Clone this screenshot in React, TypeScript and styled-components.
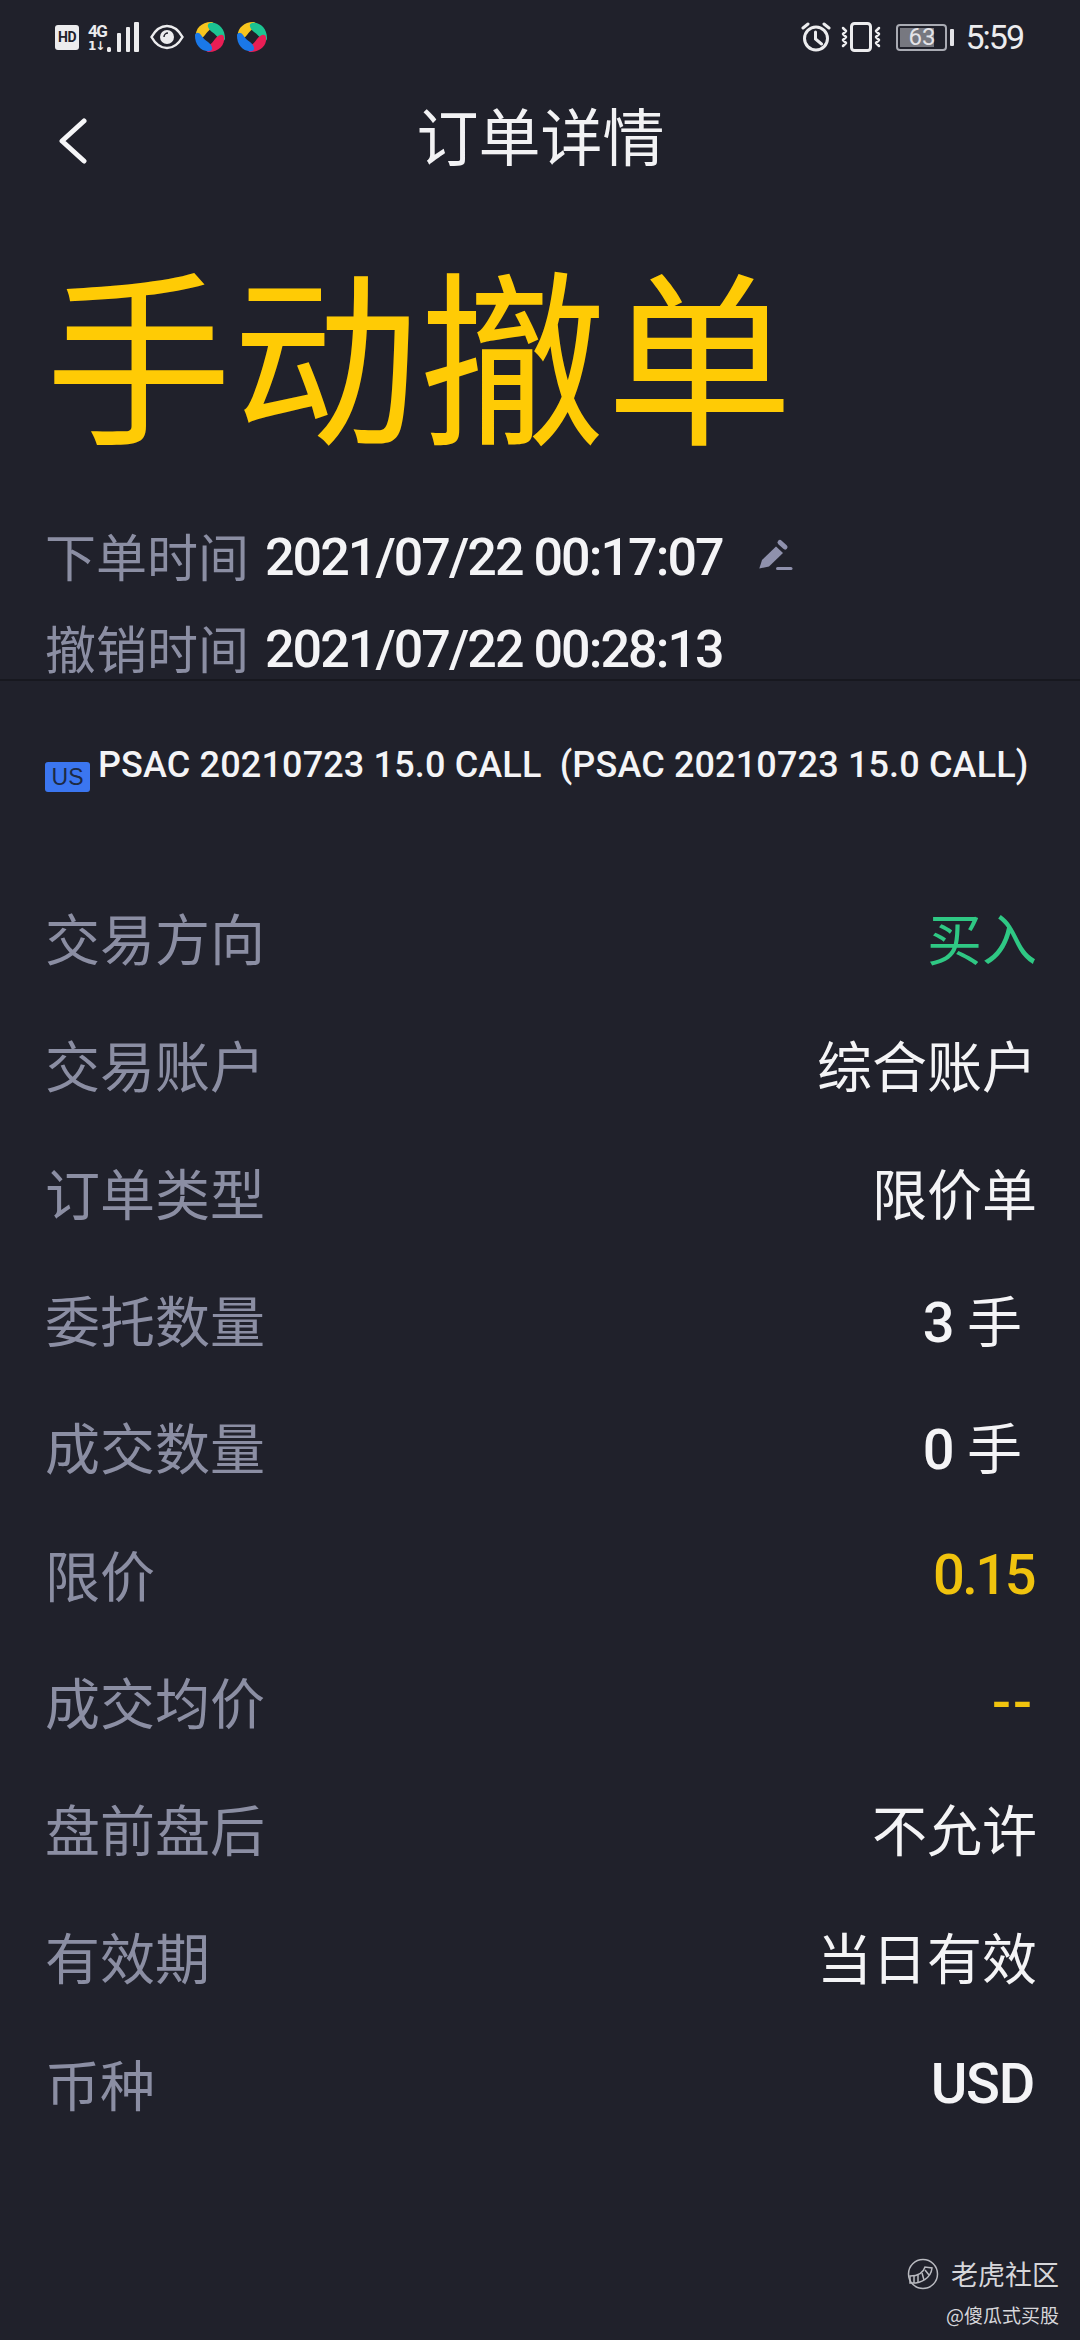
import React from 'react'
import styled, { createGlobalStyle } from 'styled-components'

const CJK = `"Noto Sans CJK SC", sans-serif`
const NUM = `Roboto, "Noto Sans CJK SC", sans-serif`

const GlobalStyle = createGlobalStyle`
	html, body {
		margin: 0;
		padding: 0;
		background: #20212b;
	}
	body {
		font-family: ${CJK};
	}
`

const Page = styled('div')`
	position: relative;
	width: 1080px;
	height: 2340px;
	overflow: hidden;
	background: #20212b;
	color: #f2f2f4;
`

const StatusBar = styled('div')`
	height: 74px;
	display: flex;
	align-items: center;
	justify-content: space-between;
	padding: 0 57px 0 55px;
`

const StatusGroup = styled('div')`
	display: flex;
	align-items: center;
`

const HdBadge = styled('span')`
	width: 24px;
	height: 25px;
	margin-right: 9px;
	border-radius: 3px;
	background: #ececee;
	color: #20212b;
	font: 700 14px/25px Roboto, sans-serif;
	letter-spacing: -0.5px;
	text-align: center;
`

const NetLabels = styled('span')`
	display: flex;
	flex-direction: column;
	width: 18px;
	color: #ececee;
`

const NetType = styled('span')`
	font: 700 17px/18px Roboto, sans-serif;
	letter-spacing: -1.5px;
`

const NetArrows = styled('span')`
	font: 700 12px/12px "DejaVu Sans", sans-serif;
	letter-spacing: -1px;
`

const ClockText = styled('span')`
	font: 400 34px/40px Roboto, sans-serif;
	color: #ececee;
	letter-spacing: -2px;
`

const BatteryBox = styled('div')`
	position: relative;
	width: 51px;
	height: 27px;
	box-sizing: border-box;
	border: 2px solid #a9abb3;
	border-radius: 4px;
	display: flex;
	align-items: center;
	justify-content: center;
	font: 400 24px/24px Roboto, sans-serif;
	color: #e4e4e8;
`

const BatteryFill = styled('i')`
	position: absolute;
	left: 2px;
	top: 2px;
	bottom: 2px;
	background: #777880;
`

const BatteryValue = styled('span')`
	position: relative;
`

const BatteryNub = styled('span')`
	width: 4px;
	height: 17px;
	margin: 0 11px 0 3px;
	border-radius: 1px;
	background: #e4e4e8;
`

const NavBar = styled('header')`
	height: 126px;
	display: flex;
	align-items: center;
	position: relative;
	padding-left: 58px;
`

const BackIcon = styled('svg')`
	margin-top: 7px;
`

const NavTitle = styled('h1')`
	position: absolute;
	left: 0;
	right: 0;
	margin: 0;
	padding: 0 0 6px 1px;
	text-align: center;
	font-size: 62px;
	font-weight: 400;
	line-height: 80px;
	color: #f2f2f4;
`

const Status = styled('div')`
	margin: 25px 0 0 45px;
	height: 250px;
	font-size: 187px;
	line-height: 250px;
	font-weight: 400;
	color: #ffcb05;
`

const MetaBlock = styled('section')`
	height: 206px;
	padding: 34px 0 0 45px;
	box-sizing: border-box;
	border-bottom: 2px solid #17181f;
`

const MetaRow = styled('div')`
	display: flex;
	align-items: center;
	height: 92px;
`

const MetaLabel = styled('span')`
	width: 220px;
	font-size: 51px;
	line-height: 60px;
	color: #8b8ea3;
`

const MetaValue = styled('span')`
	margin-top: 5px;
	font-family: ${NUM};
	font-size: 52px;
	line-height: 60px;
	font-weight: 500;
	letter-spacing: -1.95px;
	color: #f4f4f6;
`

const EditIcon = styled('svg')`
	margin-left: 34px;
	width: 36px;
	height: 36px;
`

const SymbolRow = styled('div')`
	display: flex;
	align-items: flex-start;
	margin-top: 60px;
	padding-left: 45px;
	height: 60px;
`

const MarketTag = styled('span')`
	width: 45px;
	height: 30px;
	margin-top: 21px;
	margin-right: 8px;
	border-radius: 3px;
	background: #3b76f0;
	color: #1d2a44;
	font: 400 23px/30px "Liberation Sans", sans-serif;
	text-align: center;
`

const SymbolName = styled('span')`
	margin-top: 1px;
	font-family: ${NUM};
	font-size: 36px;
	line-height: 46px;
	font-weight: 500;
	letter-spacing: 0.15px;
	white-space: pre;
	color: #f4f4f6;
`

const DetailList = styled('dl')`
	margin: 74px 0 0;
	padding: 0 46px 0 45px;
`

const DetailRow = styled('div')`
	display: flex;
	align-items: center;
	justify-content: space-between;
	height: 127.300px;
`

const DetailLabel = styled('dt')`
	padding-bottom: 5px;
	font-size: 55px;
	line-height: 70px;
	color: #8b8ea3;
`

const DetailValue = styled('dd')<{ $tone?: 'green' | 'yellow'; $tracking?: number; $inset?: boolean }>`
	margin: 0 ${(p) => (p.$inset ? '15px' : '0')} 0 0;
	font-family: ${NUM};
	font-size: 56px;
	line-height: 70px;
	font-weight: 500;
	letter-spacing: ${(p) => p.$tracking ?? 0}px;
	color: ${(p) =>
		p.$tone === 'green' ? '#2fc884' : p.$tone === 'yellow' ? '#f0c30e' : '#f4f4f6'};
`

const DetailText = styled('span')`
	margin-right: -3px;
	font-family: ${CJK};
	font-size: 55px;
	font-weight: 400;
	white-space: pre;
`

const Watermark = styled('div')`
	position: absolute;
	right: 21px;
	bottom: 10px;
	display: flex;
	flex-direction: column;
	align-items: flex-end;
	color: #d6d6da;
`

const WatermarkTop = styled('div')`
	display: flex;
	align-items: center;
	gap: 12px;
	font-size: 27px;
	line-height: 40px;
`

const WatermarkSub = styled('div')`
	font-size: 19px;
	line-height: 30px;
	margin-top: 6px;
`

const swirlPetals = [
	{ color: '#f7c51e', angle: 0 },
	{ color: '#1cc492', angle: 90 },
	{ color: '#e91e55', angle: 180 },
	{ color: '#1a78e8', angle: 270 },
]

const Swirl: React.FC<{ last?: boolean }> = ({ last }) => (
	<svg width="32" height="32" viewBox="0 0 32 32" style={{ marginRight: last ? 0 : 10 }}>
		{swirlPetals.map((petal) => (
			<path
				key={petal.color}
				d="M2 16C0.500 8 8 0.500 18 1C21 2 21 5 18 7C15 9 13 11 11 14C8 18 3 20 2 16Z"
				fill={petal.color}
				transform={`rotate(${petal.angle} 16 16)`}
			/>
		))}
	</svg>
)

const orderRows: {
	label: string
	value?: string
	text?: string
	tone?: 'green' | 'yellow'
	tracking?: number
	inset?: boolean
}[] = [
	{ label: '交易方向', text: '买入', tone: 'green' },
	{ label: '交易账户', text: '综合账户' },
	{ label: '订单类型', text: '限价单' },
	{ label: '委托数量', value: '3', text: ' 手', inset: true },
	{ label: '成交数量', value: '0', text: ' 手', inset: true },
	{ label: '限价', value: '0.15', tone: 'yellow', tracking: -2.5 },
	{ label: '成交均价', value: '--', tone: 'yellow', tracking: 2 },
	{ label: '盘前盘后', text: '不允许' },
	{ label: '有效期', text: '当日有效' },
	{ label: '币种', value: 'USD', tracking: -1.3 },
]

const App: React.FC = () => (
	<Page>
		<GlobalStyle />
		<StatusBar>
			<StatusGroup>
				<HdBadge>HD</HdBadge>
				<NetLabels>
					<NetType>4G</NetType>
					<NetArrows>1↓</NetArrows>
				</NetLabels>
				<svg width="34" height="30" viewBox="0 0 34 30" style={{ marginRight: 10 }} fill="#ececee">
					<rect x="1" y="25" width="4" height="5" rx="1.500" />
					<rect x="11" y="11" width="4" height="19" rx="1" />
					<rect x="20" y="5" width="4" height="25" rx="1" />
					<rect x="28" y="0" width="5" height="30" rx="1" />
				</svg>
				<svg width="34" height="26" viewBox="0 0 34 26" style={{ marginRight: 10 }}>
					<path d="M1.500 13C6 5 11 2 17 2s11 3 15.500 11C28 21 23 24 17 24S6 21 1.500 13Z" fill="none" stroke="#ececee" strokeWidth="2.500" />
					<circle cx="17" cy="13" r="7" fill="#ececee" />
					<path d="M14 13a4 4 0 0 1 4-4" fill="none" stroke="#20212b" strokeWidth="1.500" />
				</svg>
				<Swirl />
				<Swirl last />
			</StatusGroup>
			<StatusGroup>
				<svg width="30" height="30" viewBox="0 0 30 30" style={{ marginRight: 10 }} fill="none" stroke="#ececee" strokeWidth="3" strokeLinecap="round">
					<circle cx="15" cy="16.500" r="11.500" />
					<path d="M14.500 10v7l6 5M2 6l5-4M28 6l-5-4" />
				</svg>
				<svg width="40" height="30" viewBox="0 0 40 30" style={{ marginRight: 15 }} fill="none" stroke="#ececee" strokeWidth="3" strokeLinecap="round" strokeLinejoin="round">
					<rect x="10.500" y="1.500" width="19" height="27" rx="3" />
					<path d="M2 6l3 3-3 3 3 3-3 3 3 3-3 3M38 6l-3 3 3 3-3 3 3 3-3 3 3 3" strokeWidth="2.500" />
				</svg>
				<BatteryBox>
					<BatteryFill style={{ width: 34 }} />
					<BatteryValue>63</BatteryValue>
				</BatteryBox>
				<BatteryNub />
				<ClockText>5:59</ClockText>
			</StatusGroup>
		</StatusBar>
		<NavBar>
			<BackIcon width="30" height="46" viewBox="0 0 30 46" fill="none" stroke="#f6f6f8" strokeWidth="5" strokeLinecap="round" strokeLinejoin="round">
				<path d="M26 3 4 23l22 20" />
			</BackIcon>
			<NavTitle>订单详情</NavTitle>
		</NavBar>
		<Status>手动撤单</Status>
		<MetaBlock>
			<MetaRow>
				<MetaLabel>下单时间</MetaLabel>
				<MetaValue>2021/07/22 00:17:07</MetaValue>
				<EditIcon viewBox="0 -2 36 36" fill="#8f91ad">
					<path d="M2.300 29.500 5 21 19 7.500 26 14 12 27.500Z" />
					<path d="M23 3.500 28 8" stroke="#8f91ad" strokeWidth="5" strokeLinecap="round" />
					<rect x="19" y="28" width="16.500" height="3" rx="1.500" />
				</EditIcon>
			</MetaRow>
			<MetaRow>
				<MetaLabel>撤销时间</MetaLabel>
				<MetaValue>2021/07/22 00:28:13</MetaValue>
			</MetaRow>
		</MetaBlock>
		<SymbolRow>
			<MarketTag>US</MarketTag>
			<SymbolName>PSAC 20210723 15.0 CALL  (PSAC 20210723 15.0 CALL)</SymbolName>
		</SymbolRow>
		<DetailList>
			{orderRows.map((row) => (
				<DetailRow key={row.label}>
					<DetailLabel>{row.label}</DetailLabel>
					<DetailValue $tone={row.tone} $tracking={row.tracking} $inset={row.inset}>
						{row.value}
						{row.text && <DetailText>{row.text}</DetailText>}
					</DetailValue>
				</DetailRow>
			))}
		</DetailList>
		<Watermark>
			<WatermarkTop>
				<svg width="32" height="32" viewBox="0 0 32 32" fill="none" stroke="#b9bac0" strokeWidth="1.500">
					<circle cx="16" cy="16" r="14.500" />
					<path d="M3 18C10 18 16 16 18 9L25 10C24 20 14 26 3 25Z" />
					<path d="M7 18v7M11 17v7M15 15l2 7M18 12l4 5" />
				</svg>
				<span>老虎社区</span>
			</WatermarkTop>
			<WatermarkSub>@傻瓜式买股</WatermarkSub>
		</Watermark>
	</Page>
)

export default App
